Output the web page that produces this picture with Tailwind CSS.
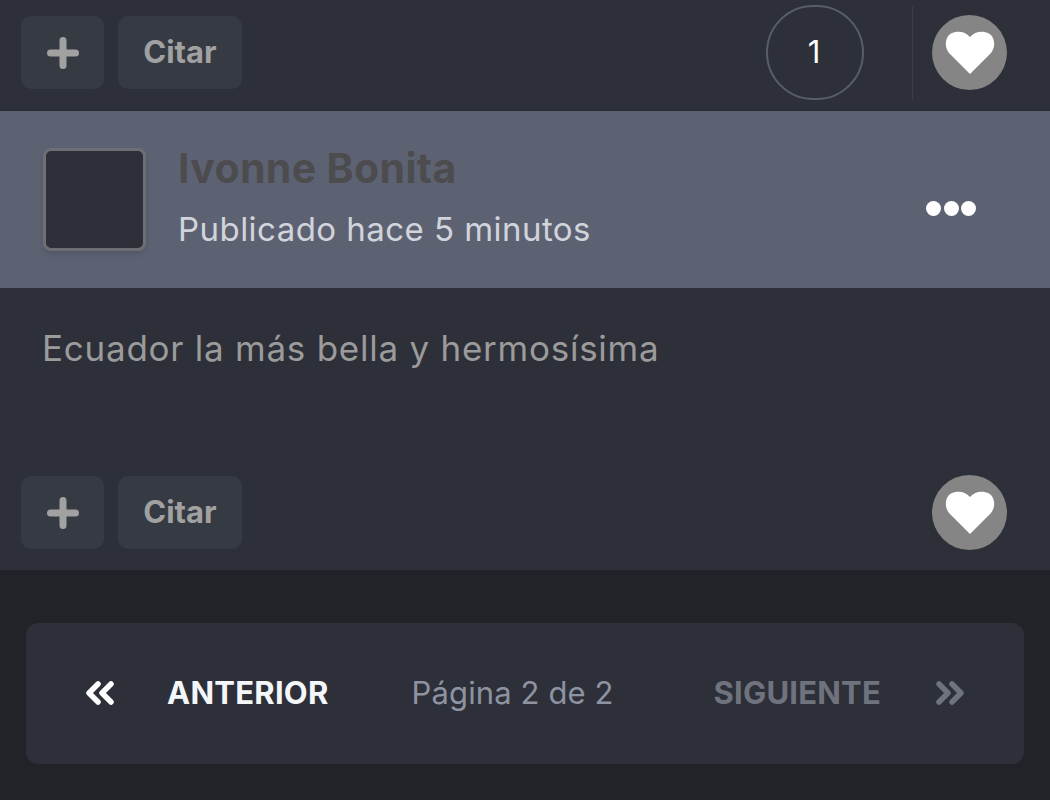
<!DOCTYPE html>
<html lang="es">
<head>
  <meta charset="UTF-8" />
  <title>Ecuador la más bella</title>
  <script src="https://cdn.jsdelivr.net/npm/@tailwindcss/browser@4"></script>
</head>
<body class="bg-[#212328] font-['Inter',sans-serif] w-[1050px] h-[800px] overflow-hidden">

  <!-- Post -->
  <div class="bg-[#2d3038] h-[570px] flex flex-col">

    <!-- Acciones post anterior -->
    <div class="h-[111px] shrink-0 flex items-start pl-[21px] border-b border-[#282a31]">
      <div class="flex gap-[14px] mt-[16px]">
        <button class="w-[83px] h-[73px] rounded-[10px] bg-[#363a43] flex items-center justify-center">
          <svg class="w-[32px] h-[32px]" viewBox="0 0 32 32"><path d="M16 3.500v25M3.500 16h25" stroke="#a1a1a1" stroke-width="7" stroke-linecap="round" fill="none"/></svg>
        </button>
        <button class="w-[124px] h-[73px] rounded-[10px] bg-[#363a43] text-[#a1a1a1] text-[31px] font-bold">Citar</button>
      </div>
      <div class="ml-[524px] mt-[5px] w-[98px] h-[95px] rounded-full border-[2.500px] border-[#585d69] flex items-center justify-center text-white text-[31px] pr-[2px]">1</div>
      <div class="ml-[48px] mt-[6px] w-px h-[94px] bg-[#3b3e47]"></div>
      <button class="ml-[19px] mt-[15px] w-[75px] h-[75px] rounded-full bg-[#858585] flex items-center justify-center">
        <svg class="w-[50px] h-[44px]" viewBox="0 0 50 44"><path d="M25 43 L4 22 C-1 16 0 6 6 2.500 C12 -0.500 20 0 25 6 C30 0 38 -0.500 44 2.500 C50 6 51 16 46 22 Z" fill="#fff"/></svg>
      </button>
    </div>

    <!-- Cabecera -->
    <div class="h-[177px] shrink-0 bg-[#5d6273] flex items-center pl-[43px]">
      <div class="w-[103px] h-[103px] rounded-[8px] bg-[#2d3038] border-[3px] border-[#6e6f74] shadow-md"></div>
      <div class="ml-[32px] -mt-[5px]">
        <div class="text-[41px] leading-[46px] font-bold tracking-[0.35px] text-[#4c4c4f]">Ivonne Bonita</div>
        <div class="text-[33px] leading-[40px] mt-[18px] tracking-[0.45px] text-[#d2d4db]">Publicado hace 5 minutos</div>
      </div>
      <div class="ml-auto mr-[74px] mt-[18px] flex gap-[2.500px]">
        <span class="w-[15px] h-[15px] rounded-full bg-white"></span>
        <span class="w-[15px] h-[15px] rounded-full bg-white"></span>
        <span class="w-[15px] h-[15px] rounded-full bg-white"></span>
      </div>
    </div>

    <!-- Contenido -->
    <div class="flex-1 pl-[43px] pt-[39px] text-[35px] leading-[42px] tracking-[0.75px] text-[#9b9b9b] -ml-[1px]">Ecuador la más bella y hermosísima</div>

    <!-- Acciones -->
    <div class="h-[95px] shrink-0 flex justify-between pl-[21px] pr-[43px]">
      <div class="flex gap-[14px] mt-[1px]">
        <button class="w-[83px] h-[73px] rounded-[10px] bg-[#363a43] flex items-center justify-center">
          <svg class="w-[32px] h-[32px]" viewBox="0 0 32 32"><path d="M16 3.500v25M3.500 16h25" stroke="#a1a1a1" stroke-width="7" stroke-linecap="round" fill="none"/></svg>
        </button>
        <button class="w-[124px] h-[73px] rounded-[10px] bg-[#363a43] text-[#a1a1a1] text-[31px] font-bold">Citar</button>
      </div>
      <button class="w-[75px] h-[75px] rounded-full bg-[#858585] flex items-center justify-center">
        <svg class="w-[50px] h-[44px]" viewBox="0 0 50 44"><path d="M25 43 L4 22 C-1 16 0 6 6 2.500 C12 -0.500 20 0 25 6 C30 0 38 -0.500 44 2.500 C50 6 51 16 46 22 Z" fill="#fff"/></svg>
      </button>
    </div>
  </div>

  <!-- Paginacion -->
  <div class="mx-[26px] mt-[53px] h-[141px] rounded-[12px] bg-[#2d3038] flex items-center pl-[59px] pr-[59px]">
    <svg class="w-[30px] h-[24px] -mt-[2px]" viewBox="0 0 30 24"><path d="M13 3 L4 12 L13 21 M26 3 L17 12 L26 21" stroke="#fff" stroke-width="5.500" stroke-linecap="round" stroke-linejoin="round" fill="none"/></svg>
    <span class="ml-[52px] text-[31px] font-bold tracking-[0.25px] text-[#f4f6fa]">ANTERIOR</span>
    <span class="ml-[83px] text-[31px] tracking-[0.12px] text-[#8e93a1]">Página 2 de 2</span>
    <span class="ml-auto text-[31px] font-bold tracking-[0.2px] text-[#6f737e]">SIGUIENTE</span>
    <svg class="ml-[54px] w-[30px] h-[24px] -mt-[2px]" viewBox="0 0 30 24"><path d="M4 3 L13 12 L4 21 M17 3 L26 12 L17 21" stroke="#6f737e" stroke-width="5.500" stroke-linecap="round" stroke-linejoin="round" fill="none"/></svg>
  </div>

</body>
</html>
